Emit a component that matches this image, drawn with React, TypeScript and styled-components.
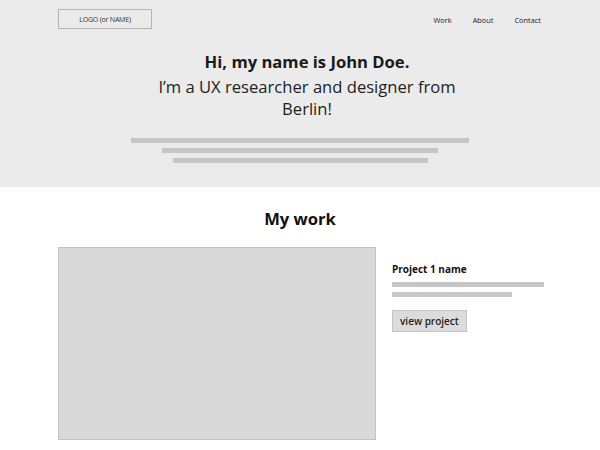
import React from "react";
import styled, { createGlobalStyle } from "styled-components";

const Global = createGlobalStyle`
  html, body { margin: 0; padding: 0; background: #ffffff; }
  body { font-family: "Open Sans", "Liberation Sans", sans-serif; color: #1e1e1e; }
  * { box-sizing: border-box; }
`;

const Header = styled.header`
  background: #ebebeb;
  height: 187px;
  padding: 9px 58px 0;
`;

const TopBar = styled.div`
  display: flex;
  align-items: center;
  justify-content: space-between;
  height: 20px;
`;

const Logo = styled.div`
  width: 94px;
  height: 20px;
  border: 1px solid #b4b4b4;
  display: flex;
  align-items: center;
  justify-content: center;
  font-size: 7px;
  color: #333;
  letter-spacing: -0.2px;
`;

const Nav = styled.nav`
  display: flex;
  gap: 21px;
  padding-right: 1px;
`;

const NavLink = styled.a`
  font-size: 7.4px;
  color: #222;
  text-decoration: none;
  padding-top: 1px;
`;

const Hero = styled.div`
  display: flex;
  flex-direction: column;
  align-items: center;
  margin-top: 22px;
`;

const HeroText = styled.div`
  display: flex;
  flex-direction: column;
  align-items: center;
  padding-left: 14px;
`;

const Title = styled.h1`
  margin: 0 0 3px;
  font-size: 16.6px;
  line-height: 22px;
  font-weight: 700;
  color: #1a1a1a;
`;

const Subtitle = styled.p`
  margin: 0;
  max-width: 310px;
  text-align: center;
  font-size: 16.6px;
  line-height: 22px;
  font-weight: 400;
  color: #222;
`;

const Lines = styled.div<{ $align?: "center" | "flex-start"; $top: number }>`
  display: flex;
  flex-direction: column;
  align-items: ${(p) => p.$align || "center"};
  gap: 5px;
  margin-top: ${(p) => p.$top}px;
`;

const Bar = styled.div<{ $w: number }>`
  width: ${(p) => p.$w}px;
  height: 5px;
  background: #c6c6c6;
`;

const Main = styled.main`
  padding: 21px 58px 0;
`;

const SectionTitle = styled.h2`
  margin: 0;
  text-align: center;
  font-size: 16.6px;
  line-height: 22px;
  font-weight: 700;
  color: #111;
`;

const ProjectRow = styled.div`
  display: flex;
  gap: 16px;
  margin-top: 17px;
`;

const Thumb = styled.div`
  flex: 0 0 318px;
  height: 193px;
  background: #d9d9d9;
  border: 1px solid #c2c2c2;
`;

const Info = styled.div`
  display: flex;
  flex-direction: column;
  align-items: flex-start;
  padding-top: 15px;
`;

const ProjectName = styled.h3`
  margin: 0;
  font-size: 10px;
  line-height: 14px;
  font-weight: 700;
  color: #111;
`;

const Button = styled.button`
  margin-top: 13px;
  height: 22px;
  padding: 0 7px;
  background: #dcdcdc;
  border: 1px solid #c4c4c4;
  border-radius: 0;
  font-family: "Open Sans", "Liberation Sans", sans-serif;
  font-size: 10px;
  font-weight: 600;
  color: #222;
  cursor: pointer;
`;

export default function App() {
  return (
    <>
      <Global />
      <Header>
        <TopBar>
          <Logo>LOGO (or NAME)</Logo>
          <Nav>
            <NavLink href="#">Work</NavLink>
            <NavLink href="#">About</NavLink>
            <NavLink href="#">Contact</NavLink>
          </Nav>
        </TopBar>
        <Hero>
          <HeroText>
            <Title>Hi, my name is John Doe.</Title>
            <Subtitle>I’m a UX researcher and designer from Berlin!</Subtitle>
          </HeroText>
          <Lines $top={18}>
            <Bar $w={338} />
            <Bar $w={276} />
            <Bar $w={255} />
          </Lines>
        </Hero>
      </Header>
      <Main>
        <SectionTitle>My work</SectionTitle>
        <ProjectRow>
          <Thumb />
          <Info>
            <ProjectName>Project 1 name</ProjectName>
            <Lines $align="flex-start" $top={6}>
              <Bar $w={152} />
              <Bar $w={120} />
            </Lines>
            <Button>view project</Button>
          </Info>
        </ProjectRow>
      </Main>
    </>
  );
}
